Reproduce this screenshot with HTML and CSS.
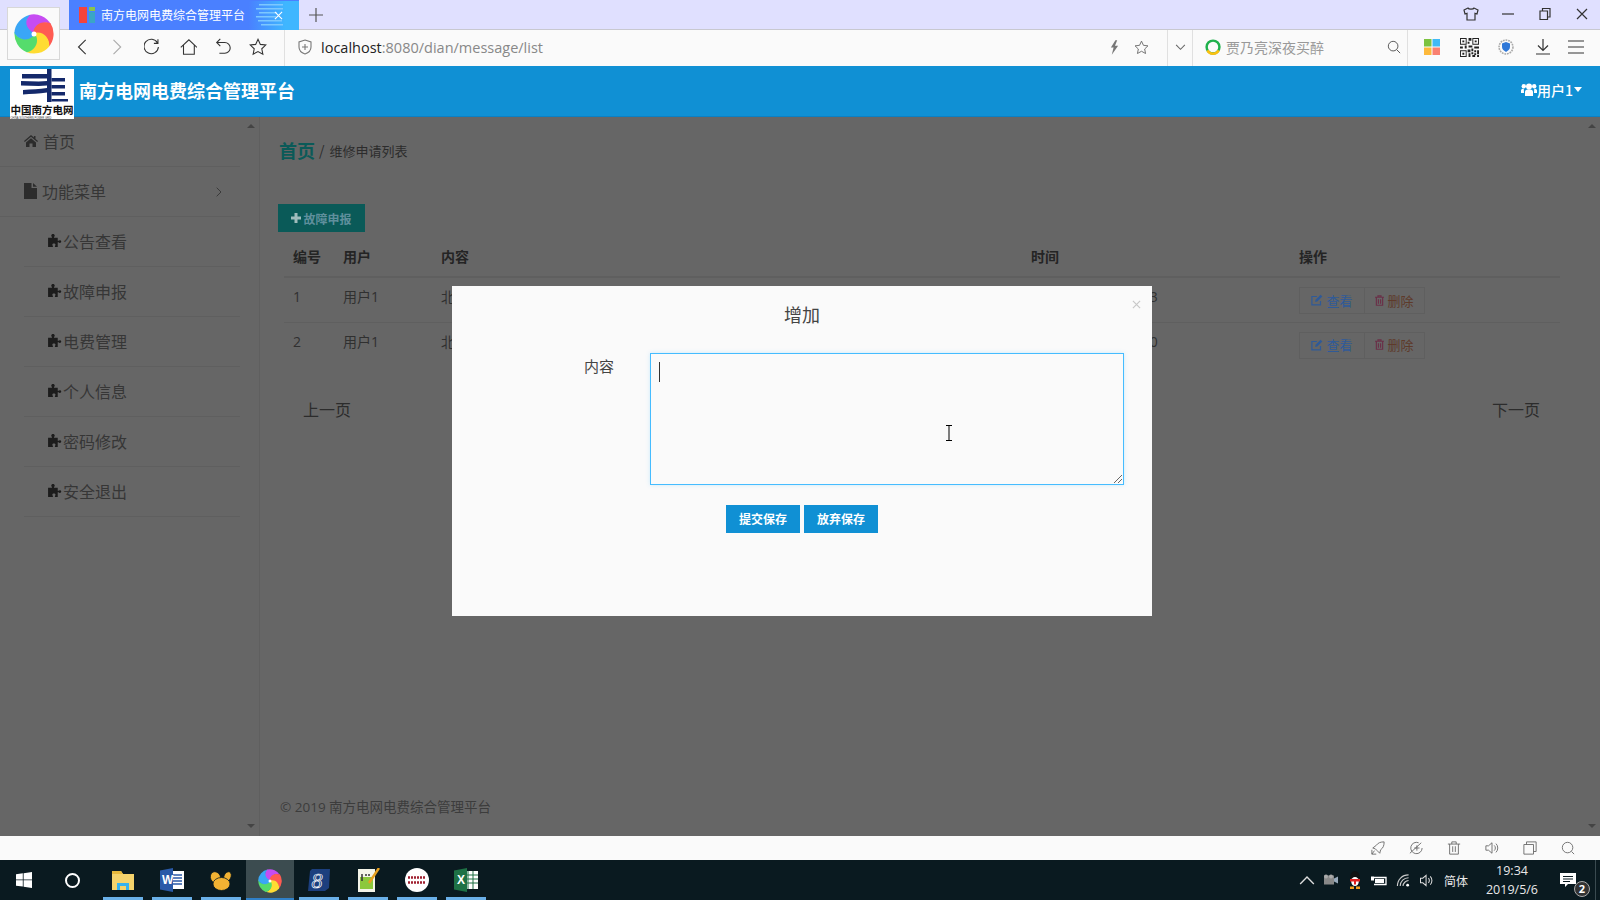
FILE: index.html
```html
<!DOCTYPE html>
<html lang="zh-CN">
<head>
<meta charset="utf-8">
<title>南方电网电费综合管理平台</title>
<link rel="stylesheet" href="styles.css">
</head>
<body>
<svg class="defs" width="0" height="0" aria-hidden="true">
  <defs>
    <path id="petal" d="M1,1 C-9,-1 -11,-12 -5,-19 A19.500,19.500 0 0 1 17,-9.500 C10,-14 2,-10 1,1Z"/>
    <symbol id="swirl" viewBox="-20 -20 40 40">
      <use href="#petal" fill="#c64cf2"/>
      <use href="#petal" transform="rotate(72)" fill="#ff5b52"/>
      <use href="#petal" transform="rotate(144)" fill="#ffdc33"/>
      <use href="#petal" transform="rotate(216)" fill="#55dc6c"/>
      <use href="#petal" transform="rotate(288)" fill="#3aa6f6"/>
      <circle r="2.500" fill="#fff"/>
    </symbol>
    <symbol id="puzzle" viewBox="0 0 16 14">
      <path fill="currentColor" d="M0 4h4.200V3.200C3.600 2.800 3.400 2.200 3.400 1.700 3.400.7 4.300 0 5.300 0s1.900.7 1.900 1.700c0 .5-.2 1.100-.8 1.500V4h4v3.400h.9c.3-.5.8-.8 1.400-.8.9 0 1.500.7 1.500 1.600s-.6 1.600-1.500 1.600c-.6 0-1.100-.3-1.400-.8h-.9V14H7.400v-1.200c.5-.4.6-.8.6-1.200 0-.8-.8-1.300-1.700-1.300s-1.700.5-1.700 1.300c0 .4.1.8.6 1.200V14H0z"/>
    </symbol>
    <symbol id="edit" viewBox="0 0 12 12">
      <path fill="none" stroke="currentColor" stroke-width="1.200" d="M9.500 7v3.900H.9V2.500h5"/>
      <path fill="currentColor" d="M4.500 5.800 9.600.8l1.700 1.700-5 5.100-2.200.4z"/>
    </symbol>
    <symbol id="trash" viewBox="0 0 10 12">
      <path fill="none" stroke="currentColor" stroke-width="1.300" d="M1.500 3v8.300h7V3M0 2.400h10M3.300 2.200V.8h3.400v1.400M3.800 4.500v5M6.200 4.500v5"/>
    </symbol>
  </defs>
</svg>

<div class="browser">
  <div class="tabbar">
    <div class="app-badge">
      <svg class="swirl-lg"><use href="#swirl"/></svg>
    </div>
    <div class="tab">
      <svg class="tab-fav" viewBox="0 0 16 16"><rect x="0" y="0" width="8" height="16" fill="#f4433c"/><rect x="10" y="0" width="6" height="4" fill="#8bc34a"/><rect x="10" y="5" width="6" height="11" fill="#3aa6c6"/></svg>
      <span class="tab-title">南方电网电费综合管理平台</span>
      <svg class="tab-fx" viewBox="0 0 30 26"><g fill="#7cc8ff"><rect x="3" y="1" width="24" height="1.500"/><rect x="0" y="5" width="27" height="1.500"/><rect x="3" y="9" width="18" height="1.500"/><rect x="0" y="13" width="20" height="1.500"/><rect x="2" y="17" width="24" height="1.500"/><rect x="5" y="21" width="22" height="1.500"/></g></svg>
      <svg class="tab-x" viewBox="0 0 10 10"><path d="M1 1l8 8M9 1l-8 8" stroke="#fff" stroke-width="1.200"/></svg>
    </div>
    <svg class="tab-plus" viewBox="0 0 14 14"><path d="M7 0v14M0 7h14" stroke="#555" stroke-width="1.200"/></svg>
    <div class="win-btns">
      <svg class="win-ico" viewBox="0 0 16 14"><path fill="none" stroke="#333" stroke-width="1.200" d="M5 1 1 3l1 4 2-.6V13h8V6.400l2 .6 1-4-4-2c-.5 1.500-5.500 1.500-6 0z"/></svg>
      <svg class="win-ico" viewBox="0 0 16 14"><path d="M2 7h12" stroke="#333" stroke-width="1.200"/></svg>
      <svg class="win-ico" viewBox="0 0 16 14"><path fill="none" stroke="#333" stroke-width="1.200" d="M3 4h7.500v8.500H3zM5.500 4V1.500H13V10h-2.500"/></svg>
      <svg class="win-ico" viewBox="0 0 16 14"><path d="M3 2l10 10M13 2 3 12" stroke="#333" stroke-width="1.200"/></svg>
    </div>
  </div>

  <div class="toolbar">
    <div class="nav-btns">
      <svg class="nav-ico" viewBox="0 0 20 20"><path class="ln" d="M13 2 5 10l8 8"/></svg>
      <svg class="nav-ico" viewBox="0 0 20 20"><path class="ln off" d="M5 2l8 8-8 8"/></svg>
      <svg class="nav-ico" viewBox="0 0 20 20"><path class="ln" transform="translate(-2 0)" d="M17 5.500A8 8 0 1 0 18 10M17.500 1.500v4.500H13"/></svg>
      <svg class="nav-ico" viewBox="0 0 20 20"><path class="ln" transform="translate(1 0)" d="M1 10.500 10 2l9 8.500M4 8v10h12V8"/></svg>
      <svg class="nav-ico" viewBox="0 0 20 20"><path class="ln" d="M7 1 3 5l4 4M3 5h9a6 6 0 0 1 0 12H6"/></svg>
      <svg class="nav-ico" viewBox="0 0 20 20"><path class="ln" d="M10 1.500l2.600 5.600 6 .7-4.400 4.200 1.200 6L10 15l-5.400 3 1.200-6L1.400 7.800l6-.7z"/></svg>
    </div>
    <div class="addr">
      <svg class="addr-shield" viewBox="0 0 14 16"><path fill="none" stroke="#777" stroke-width="1.100" d="M7 1l6 2v5c0 3.500-3 6-6 7-3-1-6-3.500-6-7V3zM7 5v6M4 8h6"/></svg>
      <span class="url"><b class="url-host">localhost</b>:8080/dian/message/list</span>
      <svg class="addr-bolt" viewBox="0 0 10 16"><path fill="#777" d="M6 0 1 8h3l-2 8 7-10H5.500L8 0z"/></svg>
      <svg class="addr-star" viewBox="0 0 20 20"><path class="ln gray" d="M10 1.500l2.600 5.600 6 .7-4.400 4.200 1.200 6L10 15l-5.400 3 1.200-6L1.400 7.800l6-.7z"/></svg>
    </div>
    <div class="dropbtn"><svg class="chev" viewBox="0 0 12 8"><path class="ln gray" d="M1 1l5 5 5-5"/></svg></div>
    <div class="search">
      <svg class="search-logo" viewBox="0 0 18 18"><circle cx="8.500" cy="8.500" r="6.800" fill="none" stroke="#1fb14c" stroke-width="2.600"/><path d="M2.500 12a6.800 6.800 0 0 0 12 0" fill="none" stroke="#fdc010" stroke-width="2.600"/></svg>
      <span class="search-text">贾乃亮深夜买醉</span>
      <svg class="search-ico" viewBox="0 0 16 16"><circle cx="7" cy="7" r="5.500" fill="none" stroke="#555" stroke-width="1.100"/><path d="M11 11l4 4" stroke="#555" stroke-width="1.100"/></svg>
    </div>
    <div class="tools">
      <svg class="tool-ico tile" viewBox="0 0 16 16"><rect width="7.500" height="7.500" fill="#7cc340"/><rect x="8.500" width="7.500" height="7.500" fill="#40baf5"/><rect y="8.500" width="7.500" height="7.500" fill="#fdb93c"/><rect x="8.500" y="8.500" width="7.500" height="7.500" fill="#f98070"/></svg>
      <svg class="tool-ico qr" viewBox="0 0 20 20"><rect width="20" height="20" fill="#fafafa"/><path fill="#222" d="M0 0h7v7H0zM13 0h7v7h-7zM0 13h7v7H0zM9 0h3v3H9zM8 4h2v2H8zM9 8h4v2H9zM0 9h3v2H0zM5 8h2v3H5zM15 9h5v2h-5zM8 12h3v3H8zM12 11h2v3h-2zM15 13h2v2h-2zM18 13h2v4h-2zM9 16h2v4H9zM12 15h2v2h-2zM13 18h3v2h-3zM15 16h2v2h-2zM18 18h2v2h-2z"/><path fill="#fafafa" d="M1 1h5v5H1zM14 1h5v5h-5zM1 14h5v5H1z"/><path fill="#222" d="M2.500 2.500h2v2h-2zM15.500 2.500h2v2h-2zM2.500 15.500h2v2h-2z"/></svg>
      <svg class="tool-ico" viewBox="0 0 18 18"><circle cx="9" cy="9" r="7.800" fill="none" stroke="#aaa" stroke-width="1.800" stroke-dasharray="2 1"/><path fill="#2f78d8" d="M9 3.500l4.500 1.500v4c0 3-2.500 4.500-4.500 5.500C7 13.500 4.500 12 4.500 9V5z"/></svg>
      <svg class="tool-ico dl" viewBox="0 0 16 16"><path class="ln" d="M8 0v11M3 6.500l5 5 5-5M1 15h14"/></svg>
      <svg class="tool-ico" viewBox="0 0 16 16"><path class="ln" d="M0 2h16M0 8h16M0 14h16"/></svg>
    </div>
  </div>

  <div class="app">
    <header class="app-header">
      <svg class="logo" viewBox="0 0 64 50">
        <rect width="64" height="50" fill="#fff"/>
        <g fill="#14296b">
          <rect x="37" y="0" width="4.500" height="33"/>
          <path d="M12 5h25v4.500H12zM11 12c9 0 18 1 26 0v4.500c-8 1-17 0-26 0zM13 21c9-1 16-.5 24-2v4.500c-8 1.500-16 1-24 2z"/>
          <path d="M41.500 9H55v3.500H41.500zM41.500 16H55v3.500H41.500zM41.500 23H55v3.500H41.500zM41.500 30H58v2.500H41.500z"/>
        </g>
        <text class="logo-cn" x="0.500" y="45">中国南方电网</text>
        <text class="logo-en" x="0.500" y="49.500">CHINA SOUTHERN POWER GRID</text>
      </svg>
      <h1 class="app-title">南方电网电费综合管理平台</h1>
      <div class="user">
        <svg class="user-ico" viewBox="0 0 16 13"><g fill="#fff"><circle cx="8" cy="3.500" r="3"/><circle cx="2.800" cy="3.300" r="2.200"/><circle cx="13.200" cy="3.300" r="2.200"/><path d="M4 13V9c0-2 1.500-2.800 4-2.800s4 .8 4 2.800v4zM0 10V7.500c0-1.200 1-1.700 2.800-1.700L3 10zM16 10V7.500c0-1.200-1-1.700-2.800-1.700L13 10z"/></g></svg>
        <span class="user-name">用户1</span>
        <span class="caret"></span>
      </div>
    </header>

    <div class="layout">
      <aside class="sidebar">
        <nav class="side-nav">
          <a class="side-item top">
            <svg class="ico-home" viewBox="0 0 14 12"><path fill="#2c2c2c" d="M7 0 0 6l.8.9L7 1.700l6.200 5.200.8-.9-2.500-2.100V1h-1.600v1.500zM2 7.500V12h3.500V8.500h3V12H12V7.500L7 3.300z"/></svg>
            <span class="home-label">首页</span>
          </a>
          <a class="side-item top menu-open">
            <svg class="ico-file" viewBox="0 0 13 16"><path fill="#2c2c2c" d="M0 0h7.500v5H13v11H0zM9 0l4 3.800H9z"/></svg>
            <span>功能菜单</span>
            <svg class="ico-chev" viewBox="0 0 6 10"><path fill="none" stroke="#3a3a3a" d="M.7.700 5 5 .7 9.300"/></svg>
          </a>
          <a class="side-item sub"><svg class="ico-puzzle"><use href="#puzzle"/></svg><span>公告查看</span></a>
          <a class="side-item sub"><svg class="ico-puzzle"><use href="#puzzle"/></svg><span>故障申报</span></a>
          <a class="side-item sub"><svg class="ico-puzzle"><use href="#puzzle"/></svg><span>电费管理</span></a>
          <a class="side-item sub"><svg class="ico-puzzle"><use href="#puzzle"/></svg><span>个人信息</span></a>
          <a class="side-item sub"><svg class="ico-puzzle"><use href="#puzzle"/></svg><span>密码修改</span></a>
          <a class="side-item sub"><svg class="ico-puzzle"><use href="#puzzle"/></svg><span>安全退出</span></a>
        </nav>
        <div class="scrollbar"><span class="arrow-up"></span><span class="arrow-down"></span></div>
      </aside>

      <main class="main">
        <div class="content">
          <div class="crumbs"><a class="crumb-home">首页</a><span class="crumb-sep">/</span><span class="crumb-cur">维修申请列表</span></div>
          <a class="btn-add"><svg class="ico-plus" viewBox="0 0 10 10"><path fill="#9fbcbc" d="M3.500 0h3v3.500H10v3H6.500V10h-3V6.500H0v-3h3.500z"/></svg>故障申报</a>
          <table class="grid">
            <thead>
              <tr><th class="c1">编号</th><th class="c2">用户</th><th class="c3">内容</th><th class="c4">时间</th><th class="c5">操作</th></tr>
            </thead>
            <tbody>
              <tr>
                <td>1</td><td>用户1</td><td>北京路供电线路故障</td><td class="time">2019-04-28 19:23:33</td>
                <td><div class="btn-group"><a class="act act-view"><svg class="ico-act"><use href="#edit"/></svg>查看</a><a class="act act-del"><svg class="ico-trash"><use href="#trash"/></svg>删除</a></div></td>
              </tr>
              <tr>
                <td>2</td><td>用户1</td><td>北京路电表故障报修</td><td class="time">2019-05-06 19:30:40</td>
                <td><div class="btn-group"><a class="act act-view"><svg class="ico-act"><use href="#edit"/></svg>查看</a><a class="act act-del"><svg class="ico-trash"><use href="#trash"/></svg>删除</a></div></td>
              </tr>
            </tbody>
          </table>
          <div class="pager"><a>上一页</a><a>下一页</a></div>
          <footer class="foot">© 2019 南方电网电费综合管理平台</footer>
        </div>
        <div class="scrollbar"><span class="arrow-up"></span><span class="arrow-down"></span></div>
      </main>
    </div>

    <div class="modal">
      <svg class="modal-x" viewBox="0 0 10 10"><path d="M1 1l8 8M9 1l-8 8" stroke="#c8c8c8" stroke-width="1.300"/></svg>
      <h2 class="modal-title">增加</h2>
      <div class="form-row">
        <label class="form-label">内容</label>
        <div class="fake-area">
          <span class="text-caret"></span>
          <svg class="ibeam" viewBox="0 0 8 16"><path d="M1 .5h6M1 15.500h6M4 .5v15" stroke="#000" fill="none"/></svg>
          <svg class="resize" viewBox="0 0 8 8"><path d="M0 8l8-8M4 8l4-4" stroke="#666"/></svg>
        </div>
      </div>
      <div class="form-actions"><a class="btn-primary">提交保存</a><a class="btn-primary">放弃保存</a></div>
    </div>
  </div>

  <div class="statusbar">
    <svg class="st-ico" viewBox="0 0 16 16"><path class="ln thin" d="M6 5c2-3 5-4 9-4 0 4-1 7-4 9l-1 4-3-3-2-2-3-1zM4 11l-3 4M1 10v5h5"/></svg>
    <svg class="st-ico" viewBox="0 0 16 16"><path class="ln thin" d="M15 8A6.500 6.500 0 1 1 11 2M9 5v6M6 8h6M1 14 14 2"/></svg>
    <svg class="st-ico" viewBox="0 0 16 16"><path class="ln thin" d="M1 3.500h14M5.500 3.500V1h5v2.500M3 3.500V15h10V3.500M6.500 6v6.500M9.500 6v6.500"/></svg>
    <svg class="st-ico" viewBox="0 0 16 16"><path class="ln thin" d="M1 5.500h3L8 2v12l-4-3.500H1zM10.500 5a4 4 0 0 1 0 6M12.500 3a7 7 0 0 1 0 10"/></svg>
    <svg class="st-ico" viewBox="0 0 16 16"><path class="ln thin" d="M1 4h11v11H1zM4 4V1h11v11h-3"/></svg>
    <svg class="st-ico" viewBox="0 0 16 16"><circle class="ln thin" cx="7.500" cy="7.500" r="6"/><path class="ln thin" d="M12 12l3 3"/></svg>
  </div>

  <div class="taskbar">
    <div class="tb-start"><svg class="tb-win" viewBox="0 0 16 16"><path fill="#fff" d="M0 2.300 6.800 1.300v6.200H0zM7.600 1.200 16 0v7.500H7.600zM0 8.300h6.800v6.300L0 13.700zM7.600 8.300H16V16l-8.400-1.200z"/></svg></div>
    <div class="tb-cortana"><span class="ring"></span></div>
    <div class="tb-app open"><svg class="tb-ico" viewBox="0 0 24 24"><path fill="#f5d36c" d="M1 3h9l2 3h11v16H1z"/><path fill="#e8b93c" d="M1 3h9l2 3H1z"/><path fill="#36b2f0" d="M6 22v-7h12v7h-3v-4H9v4z"/></svg></div>
    <div class="tb-app open"><svg class="tb-ico" viewBox="0 0 24 24"><rect x="9" y="3" width="15" height="18" fill="#fff"/><path d="M13 7h9M13 10h9M13 13h9M13 16h9" stroke="#2a5aa8" stroke-width="1.500"/><path fill="#2a5aa8" d="M0 2.500 13 0v24L0 21.500z"/><text class="tb-letter" x="2" y="16">W</text></svg></div>
    <div class="tb-app open"><svg class="tb-ico" viewBox="0 0 24 24"><g fill="#f2b233" stroke="#0a1a20" stroke-width=".8"><ellipse cx="6.500" cy="9.500" rx="5" ry="6" transform="rotate(-25 6.500 9.500)"/><ellipse cx="18.500" cy="8.500" rx="3.500" ry="5" transform="rotate(25 18.500 8.500)"/><ellipse cx="12.500" cy="16" rx="8.500" ry="6.500"/></g></svg></div>
    <div class="tb-app active"><svg class="tb-ico"><use href="#swirl"/></svg></div>
    <div class="tb-app open"><svg class="tb-ico" viewBox="0 0 24 24"><path d="M5 1h18l-1 19-4 3H1l2-20z" fill="#1c3f7e"/><text class="tb-eight" x="4.500" y="20">8</text></svg></div>
    <div class="tb-app open"><svg class="tb-ico" viewBox="0 0 24 24"><path fill="#f4f4e8" d="M2 1h17v23H2z"/><path fill="#8cc83c" d="M4 9h13v12H4z"/><path d="M6 6v7M9 7h2M12 7h2" stroke="#333" stroke-width="1.500"/><path stroke="#e8a020" stroke-width="2.500" d="M23 0 13 15"/></svg></div>
    <div class="tb-app open"><svg class="tb-ico" viewBox="0 0 24 24"><circle cx="12" cy="12" r="12" fill="#fff"/><path d="M3 9.500h18M3 14.500h18" stroke="#a02030" stroke-width="2.500" stroke-dasharray="2 1"/></svg></div>
    <div class="tb-app open"><svg class="tb-ico" viewBox="0 0 24 24"><rect x="9" y="3" width="15" height="18" fill="#fff"/><path d="M14 3v18M19 3v18M9 7h15M9 11h15M9 15h15" stroke="#1e7145" stroke-width="1"/><path fill="#1e7145" d="M0 2.500 13 0v24L0 21.500z"/><text class="tb-letter" x="3" y="16">X</text></svg></div>
    <div class="tray">
      <svg class="tray-ico" viewBox="0 0 14 8"><path fill="none" stroke="#ddd" stroke-width="1.200" d="M1 7l6-6 6 6"/></svg>
      <svg class="tray-ico" viewBox="0 0 16 12"><rect x="1" y="1" width="10" height="9" fill="#888"/><circle cx="3" cy="2" r="2" fill="#aaa"/><circle cx="8" cy="2" r="2" fill="#aaa"/><path fill="#9ab" d="M11 4l4-2v7l-4-2z"/></svg>
      <svg class="tray-ico tall" viewBox="0 0 16 18"><ellipse cx="8" cy="7" rx="5" ry="7" fill="#111"/><ellipse cx="8" cy="10.500" rx="3.800" ry="4.500" fill="#fff"/><path fill="#e02020" d="M3 8h10v2.500H9v3H7v-3H3z"/><path fill="#f4a020" d="M3 15.500h4V18H3zM9 15.500h4V18H9z"/></svg>
      <svg class="tray-ico" viewBox="0 0 16 12"><path fill="none" stroke="#fff" stroke-width="1.300" d="M3 3h12v7H3"/><path fill="#fff" d="M4 4.500h9v4H4zM0 2h3v4H0z"/></svg>
      <svg class="tray-ico" viewBox="0 0 14 14"><path fill="none" stroke="#ccc" stroke-width="1.200" d="M1 13C1 6 6 1 13 1M4 13c0-5 4-9 9-9M7 13c0-3 3-6 6-6"/><circle cx="12" cy="12" r="1.500" fill="#fff"/></svg>
      <svg class="tray-ico" viewBox="0 0 16 14"><path fill="none" stroke="#ddd" stroke-width="1.100" d="M1 4.500h2.500L7 1.500v11l-3.500-3H1zM9.500 4.500a3.500 3.500 0 0 1 0 5M11.500 2.500a6.500 6.500 0 0 1 0 9"/></svg>
      <span class="ime">简体</span>
      <div class="clock"><span>19:34</span><span>2019/5/6</span></div>
      <div class="notif">
        <svg class="notif-ico" viewBox="0 0 16 14"><path fill="#fff" d="M0 0h16v11H8l-3 3v-3H0z"/><path stroke="#0a1a20" d="M3 3.500h10M3 6h10M3 8.500h7"/></svg>
        <span class="notif-badge">2</span>
      </div>
    </div>
  </div>
</div>
</body>
</html>
```

FILE: styles.css
```css
* { box-sizing: border-box; }
html, body { margin: 0; padding: 0; height: 100%; overflow: hidden; }
body { font-family: "Open Sans", "Noto Sans CJK SC", sans-serif; font-size: 14px; color: #333; }
a { display: block; }
.defs { display: block; height: 0; }
.ln { fill: none; stroke: #333; stroke-width: 1.200; }
.ln.off { stroke: #aaa; }
.ln.gray { stroke: #666; }
.ln.thin { stroke: #666; stroke-width: 1; }

.browser { width: 1600px; height: 900px; display: flex; flex-direction: column; }

/* tab strip */
.tabbar { height: 30px; background: #e0e0ff; border-bottom: 1px solid #c8c8d0; display: flex; align-items: flex-start; padding-left: 7px; position: relative; z-index: 2; }
.app-badge { width: 53px; height: 53px; margin-top: 7px; background: #fafafa; border: 1px solid #d8d8d8; display: flex; align-items: center; justify-content: center; flex: none; }
.swirl-lg { width: 40px; height: 40px; }
.tab { width: 230px; height: 30px; margin-left: 9px; flex: none; display: flex; align-items: center; padding-left: 10px; padding-bottom: 2px; background: linear-gradient(90deg, #4a80ff 0 78%, #3fb6ff 94%); border-top: 1px solid #4a80ff; }
.tab-fav { width: 16px; height: 16px; flex: none; }
.tab-title { margin-left: 6px; width: 154px; font-size: 12px; color: #fff; font-family: "Noto Sans CJK SC", sans-serif; white-space: nowrap; }
.tab-fx { width: 32px; height: 26px; margin-top: 2px; flex: none; }
.tab-x { width: 9px; height: 9px; margin-left: -13px; margin-top: 2px; flex: none; }
.tab-plus { width: 14px; height: 14px; margin: 8px 0 0 10px; flex: none; }
.win-btns { margin-left: auto; display: flex; padding-right: 0; margin-top: 7px; }
.win-ico { width: 16px; height: 14px; margin-right: 21px; flex: none; }
.win-ico:last-child { margin-right: 10px; }

/* address bar */
.toolbar { height: 36px; background: #fafafa; display: flex; align-items: stretch; padding-bottom: 2px; }
.nav-btns { width: 285px; padding-left: 74px; border-right: 1px solid #e0e0e0; display: flex; align-items: center; flex: none; margin-bottom: -2px; padding-bottom: 2px; }
.nav-ico { width: 18px; height: 18px; margin-right: 17px; flex: none; }
.addr { width: 883px; display: flex; align-items: center; padding-left: 13px; border-right: 1px solid #e0e0e0; flex: none; margin-bottom: -2px; padding-bottom: 2px; }
.addr-shield { width: 14px; height: 16px; flex: none; }
.url { margin-left: 9px; font-family: "Open Sans", sans-serif; font-size: 14.500px; color: #888; white-space: nowrap; width: 784px; }
.url-host { font-weight: 400; color: #222; }
.addr-bolt { width: 9px; height: 15px; margin-left: 5px; flex: none; }
.addr-star { width: 15px; height: 15px; margin-left: 15px; flex: none; }
.dropbtn { width: 25px; display: flex; align-items: center; justify-content: center; border-right: 1px solid #e0e0e0; flex: none; margin-bottom: -2px; padding-bottom: 2px; }
.chev { width: 11px; height: 7px; }
.search { width: 215px; display: flex; align-items: center; padding-left: 12px; border-right: 1px solid #e0e0e0; flex: none; margin-bottom: -2px; padding-bottom: 2px; }
.search-logo { width: 17px; height: 17px; flex: none; }
.search-text { margin-left: 4px; width: 161px; font-size: 14px; color: #999; font-family: "Noto Sans CJK SC", sans-serif; }
.search-ico { width: 14px; height: 14px; flex: none; }
.tools { flex: 1; display: flex; align-items: center; padding-left: 16px; }
.tool-ico { width: 16px; height: 16px; margin-right: 21px; flex: none; }
.tool-ico.tile { margin-right: 20px; }
.tool-ico.qr { width: 19px; height: 19px; margin-right: 19px; }
.tool-ico.dl { margin-right: 17px; }

/* application */
.app { flex: 1; min-height: 0; position: relative; display: flex; flex-direction: column; background: #666; }
.app-header { height: 51px; background: #1090d4; border-bottom: 1px solid #0c80c4; display: flex; align-items: center; padding-left: 10px; flex: none; position: relative; z-index: 1; }
.logo { width: 64px; height: 50px; flex: none; align-self: flex-start; margin-top: 3px; }
.logo-cn { font: 700 10.500px "Noto Sans CJK SC", sans-serif; fill: #111; }
.logo-en { font: 400 2.600px "Liberation Sans", sans-serif; fill: #333; }
.app-title { margin: 0 0 2px 5px; font: 700 18px "Noto Sans CJK SC", sans-serif; color: #fff; }
.user { margin-left: auto; margin-right: 18px; margin-bottom: 3px; display: flex; align-items: center; color: #fff; font: 500 14px "Noto Sans CJK SC", sans-serif; }
.user-ico { width: 16px; height: 13px; }
.caret { width: 0; height: 0; margin-left: 1px; border: 4px solid transparent; border-top: 5px solid #fff; border-bottom: 0; }

.layout { flex: 1; min-height: 0; display: flex; }
.sidebar { width: 260px; flex: none; display: flex; border-right: 1px solid #5f5f5f; }
.side-nav { width: 240px; margin-right: 2px; flex: none; }
.side-item { height: 50px; display: flex; align-items: center; padding-bottom: 2px; border-bottom: 1px solid #5f5f5f; font-family: "Noto Sans CJK SC", sans-serif; font-size: 16px; color: #363636; }
.side-item.top { padding-left: 24px; }
.side-item.sub { margin-left: 24px; padding-left: 24px; }
.ico-home { width: 14px; height: 12px; margin-right: 5px; flex: none; }
.ico-file { width: 13px; height: 16px; margin-right: 5px; flex: none; }
.ico-chev { width: 6px; height: 10px; margin: 3px 0 0 110px; flex: none; }
.ico-puzzle { width: 15px; height: 13px; margin-right: 0; color: #1c1c1c; flex: none; }
.scrollbar { width: 17px; flex: none; display: flex; flex-direction: column; justify-content: space-between; align-items: center; padding: 7px 0 8px; }
.arrow-up, .arrow-down { width: 0; height: 0; border: 4px solid transparent; }
.arrow-up { border-bottom: 4px solid #444; border-top: 0; }
.arrow-down { border-top: 4px solid #444; border-bottom: 0; }

.main { flex: 1; min-width: 0; display: flex; }
.content { flex: 1; min-width: 0; display: flex; flex-direction: column; padding-left: 20px; }
.crumbs { height: 24px; margin-top: 21px; display: flex; align-items: center; font-family: "Noto Sans CJK SC", sans-serif; color: #2c2c2c; }
.crumb-home { font-size: 18px; font-weight: 700; color: #0b5a58; margin-left: -1px; }
.crumb-sep { margin: 0 5px 0 4px; font-size: 14px; }
.crumb-cur { font-size: 13px; }
.btn-add { width: 87px; height: 28px; margin: 42px 0 0 -2px; background: #0a5a58; color: #5f8f9c; display: flex; align-items: center; justify-content: center; font: 700 12px "Noto Sans CJK SC", sans-serif; }
.ico-plus { width: 10px; height: 10px; margin-right: 2px; }

.grid { width: 1276px; margin-left: 4px; border-collapse: collapse; table-layout: fixed; font-family: "Open Sans", "Noto Sans CJK SC", sans-serif; font-size: 14px; color: #303030; }
.grid th, .grid td { padding: 0 9px; text-align: left; white-space: nowrap; overflow: hidden; }
.grid th { height: 45px; padding-top: 3px; font: 700 14px "Noto Sans CJK SC", sans-serif; color: #242424; border-bottom: 2px solid #5f5f5f; }
.grid td { height: 45px; vertical-align: top; padding-top: 9px; line-height: 20px; border-bottom: 1px solid #5f5f5f; }
.grid tr:last-child td { border-bottom: 0; }
.grid .time { letter-spacing: -.3px; }
.c1 { width: 50px; }
.c2 { width: 98px; }
.c3 { width: 590px; }
.c4 { width: 268px; }
.c5 { width: 270px; }
.btn-group { display: flex; width: 126px; height: 27px; border: 1px solid #5f5f5f; font: 400 13px "Noto Sans CJK SC", sans-serif; }
.act { display: flex; align-items: center; justify-content: center; height: 100%; padding-bottom: 1px; }
.act-view { width: 65px; color: #2f5a98; border-right: 1px solid #5f5f5f; }
.act-del { width: 59px; color: #5e3a2a; }
.ico-act { width: 12px; height: 12px; margin-right: 3px; }
.ico-trash { width: 9px; height: 11px; margin-right: 3px; color: #6a3048; }

.pager { display: flex; justify-content: space-between; margin: 30px 43px 0 23px; font: 400 16px "Noto Sans CJK SC", sans-serif; color: #2c2c2c; }
.foot { margin-top: auto; height: 20px; margin-bottom: 19px; line-height: 20px; color: #3c3c3c; font-size: 13.500px; }

/* dialog */
.modal { position: absolute; left: 452px; top: 220px; width: 700px; height: 330px; background: #fafafa; z-index: 3; font-family: "Noto Sans CJK SC", sans-serif; display: flex; flex-direction: column; }
.modal-x { position: absolute; right: 11px; top: 14px; width: 9px; height: 9px; }
.modal-title { margin: 16px 0 0; font-size: 18px; line-height: 24px; font-weight: 400; text-align: center; color: #444; }
.form-row { display: flex; margin-top: 27px; }
.form-label { width: 198px; padding-right: 36px; text-align: right; font-size: 15px; line-height: 26px; color: #444; flex: none; }
.fake-area { position: relative; width: 474px; height: 132px; border: 1.500px solid #45bcff; box-shadow: 0 0 4px rgba(69,188,255,.25); background: #fafafa; flex: none; }
.text-caret { position: absolute; left: 8px; top: 8px; width: 1px; height: 20px; background: #333; }
.ibeam { position: absolute; left: 294px; top: 71px; width: 8px; height: 16px; }
.resize { position: absolute; right: 1px; bottom: 1px; width: 8px; height: 8px; }
.form-actions { display: flex; gap: 4px; margin: 20px 0 0 274px; }
.btn-primary { width: 74px; height: 28px; background: #1090d4; color: #fff; display: flex; align-items: center; justify-content: center; padding-bottom: 1px; font-size: 12px; font-weight: 700; }

/* browser status bar */
.statusbar { height: 24px; background: #fafafa; display: flex; align-items: center; justify-content: flex-end; flex: none; padding-right: 25px; gap: 24px; }
.st-ico { width: 14px; height: 14px; flex: none; }

/* taskbar */
.taskbar { height: 40px; flex: none; background: #0a1a20; display: flex; align-items: center; color: #fff; }
.tb-start { width: 48px; height: 40px; display: flex; align-items: center; justify-content: center; flex: none; }
.tb-win { width: 16px; height: 16px; }
.tb-cortana { width: 48px; height: 40px; display: flex; align-items: center; justify-content: center; flex: none; }
.ring { width: 15px; height: 15px; border-radius: 50%; border: 2px solid #fff; }
.tb-app { width: 40px; height: 40px; margin-left: 9px; display: flex; align-items: center; justify-content: center; border-bottom: 3px solid transparent; flex: none; padding-top: 3px; }
.tb-app.open { border-bottom-color: #6ab0e8; }
.tb-app:nth-child(3) { margin-left: 7px; }
.tb-app.active { width: 48px; margin-left: 5px; margin-right: -4px; background: #3c4c50; border-bottom: 2px solid #2f80c8; }
.tb-ico { width: 24px; height: 24px; }
.tb-letter { font: 700 12px "Liberation Sans", sans-serif; fill: #fff; }
.tb-eight { font: italic 22px "Liberation Serif", serif; fill: none; stroke: #fff; stroke-width: .7px; }
.tray { margin-left: auto; display: flex; align-items: center; height: 40px; padding-left: 0; font-family: "Noto Sans CJK SC", sans-serif; }
.tray-ico { width: 16px; height: 13px; margin-right: 8px; flex: none; }
.tray-ico.tall { height: 18px; }
.ime { font-size: 12px; color: #e8e8e8; margin-left: 1px; width: 30px; }
.clock { width: 72px; display: flex; flex-direction: column; align-items: center; font-family: "Open Sans", sans-serif; font-size: 12.500px; line-height: 19px; color: #e8e8e8; margin-left: 2px; }
.notif { position: relative; width: 48px; height: 40px; display: flex; align-items: center; justify-content: center; border-right: 1px solid #3a4a50; margin-right: 4px; padding-right: 8px; }
.notif-ico { width: 16px; height: 14px; }
.notif-badge { position: absolute; left: 26px; top: 21px; width: 16px; height: 16px; border-radius: 50%; background: #333; border: 1px solid #aaa; color: #fff; font: 700 11px/14px "Open Sans", sans-serif; text-align: center; }
```
